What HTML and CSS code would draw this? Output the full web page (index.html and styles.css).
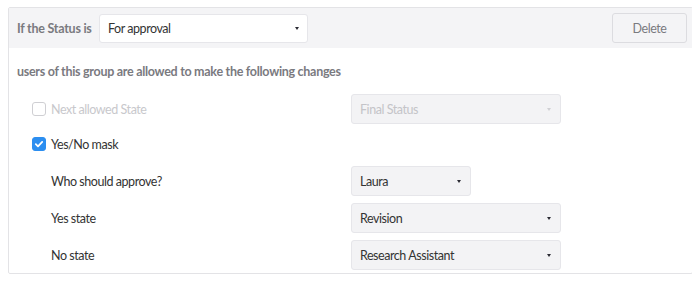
FILE: index.html
```html
<!DOCTYPE html>
<html>
<head>
<meta charset="utf-8">
<link rel="stylesheet" href="styles.css">
</head>
<body>
<div class="panel">
  <div class="panel-head">
    <span class="head-label">If the Status is</span>
    <div class="select head-select">
      <span class="select-text">For approval</span>
      <span class="caret"></span>
    </div>
    <button class="btn-delete">Delete</button>
  </div>
  <div class="panel-body">
    <div class="intro">users of this group are allowed to make the following changes</div>
    <div class="row row-first">
      <label class="check disabled"><span class="box"></span><span>Next allowed State</span></label>
      <div class="select wide disabled"><span class="select-text">Final Status</span><span class="caret"></span></div>
    </div>
    <div class="row row-check">
      <label class="check"><span class="box checked"><svg viewBox="0 0 14 14" width="14" height="14"><path d="M3.8 7.2 L6 9.3 L10.2 4.9" fill="none" stroke="#fff" stroke-width="1.8" stroke-linecap="round" stroke-linejoin="round"/></svg></span><span>Yes/No mask</span></label>
    </div>
    <div class="row">
      <span class="sub-label">Who should approve?</span>
      <div class="select narrow"><span class="select-text">Laura</span><span class="caret"></span></div>
    </div>
    <div class="row">
      <span class="sub-label">Yes state</span>
      <div class="select wide"><span class="select-text">Revision</span><span class="caret"></span></div>
    </div>
    <div class="row">
      <span class="sub-label">No state</span>
      <div class="select wide"><span class="select-text">Research Assistant</span><span class="caret"></span></div>
    </div>
  </div>
</div>
</body>
</html>
```
FILE: styles.css
```css
* { box-sizing: border-box; }
body {
  margin: 7px 8px;
  font-family: "Lato", "Liberation Sans", sans-serif;
  font-size: 12.5px;
  letter-spacing: -0.45px;
  color: #333;
  background: #fff;
}
.panel {
  width: 685px;
  height: 267px;
  border: 1px solid #e3e3e6;
  border-radius: 2px;
}
.panel-head {
  display: flex;
  align-items: center;
  height: 40px;
  background: #f4f4f6;
  padding: 0 5px 0 8px;
}
.head-label {
  font-weight: 700;
  color: #7a7a7f;
  width: 82px;
  letter-spacing: -0.25px;
}
.select {
  display: flex;
  align-items: center;
  justify-content: space-between;
  height: 30px;
  padding: 0 9px 0 8px;
  border: 1px solid #e6e6ea;
  border-radius: 3px;
  background: #f3f3f5;
  color: #333;
}
.head-select {
  width: 209px;
  height: 29px;
  padding-right: 8px;
  background: #fff;
}
.caret {
  width: 0;
  height: 0;
  border-left: 2.5px solid transparent;
  border-right: 2.5px solid transparent;
  border-top: 3px solid #2a2a33;
}
.btn-delete {
  margin-left: auto;
  width: 75px;
  height: 30px;
  border: 1px solid #dcdce0;
  border-radius: 3px;
  background: #f4f4f6;
  color: #7a7a7f;
  font-family: inherit;
  font-size: 12.5px;
  letter-spacing: -0.45px;
}
.panel-body {
  padding: 17px 8px 0 8px;
}
.intro {
  font-weight: 700;
  color: #7a7a7f;
  height: 14px;
  line-height: 14px;
  letter-spacing: -0.29px;
}
.row {
  display: flex;
  align-items: center;
  height: 30px;
  margin-top: 7px;
  padding-left: 15px;
}
.row-first { margin-top: 15px; }
.row-check { margin-top: 5px; }
.check {
  display: flex;
  align-items: center;
  width: 319px;
}
.check.disabled { color: #c8c8cc; }
.box {
  width: 14px;
  height: 14px;
  border: 1px solid #cfcfd3;
  border-radius: 3px;
  margin-right: 5px;
  display: flex;
}
.box.checked {
  background: #2c8ef0;
  border-color: #2c8ef0;
}
.box svg { margin: -1px; }
.sub-label {
  width: 319px;
  padding-left: 19px;
}
.wide { width: 210px; }
.narrow { width: 120px; }
.select.disabled { color: #c4c4c8; }
.select.disabled .caret { border-top-color: #d0d0d4; }
```
